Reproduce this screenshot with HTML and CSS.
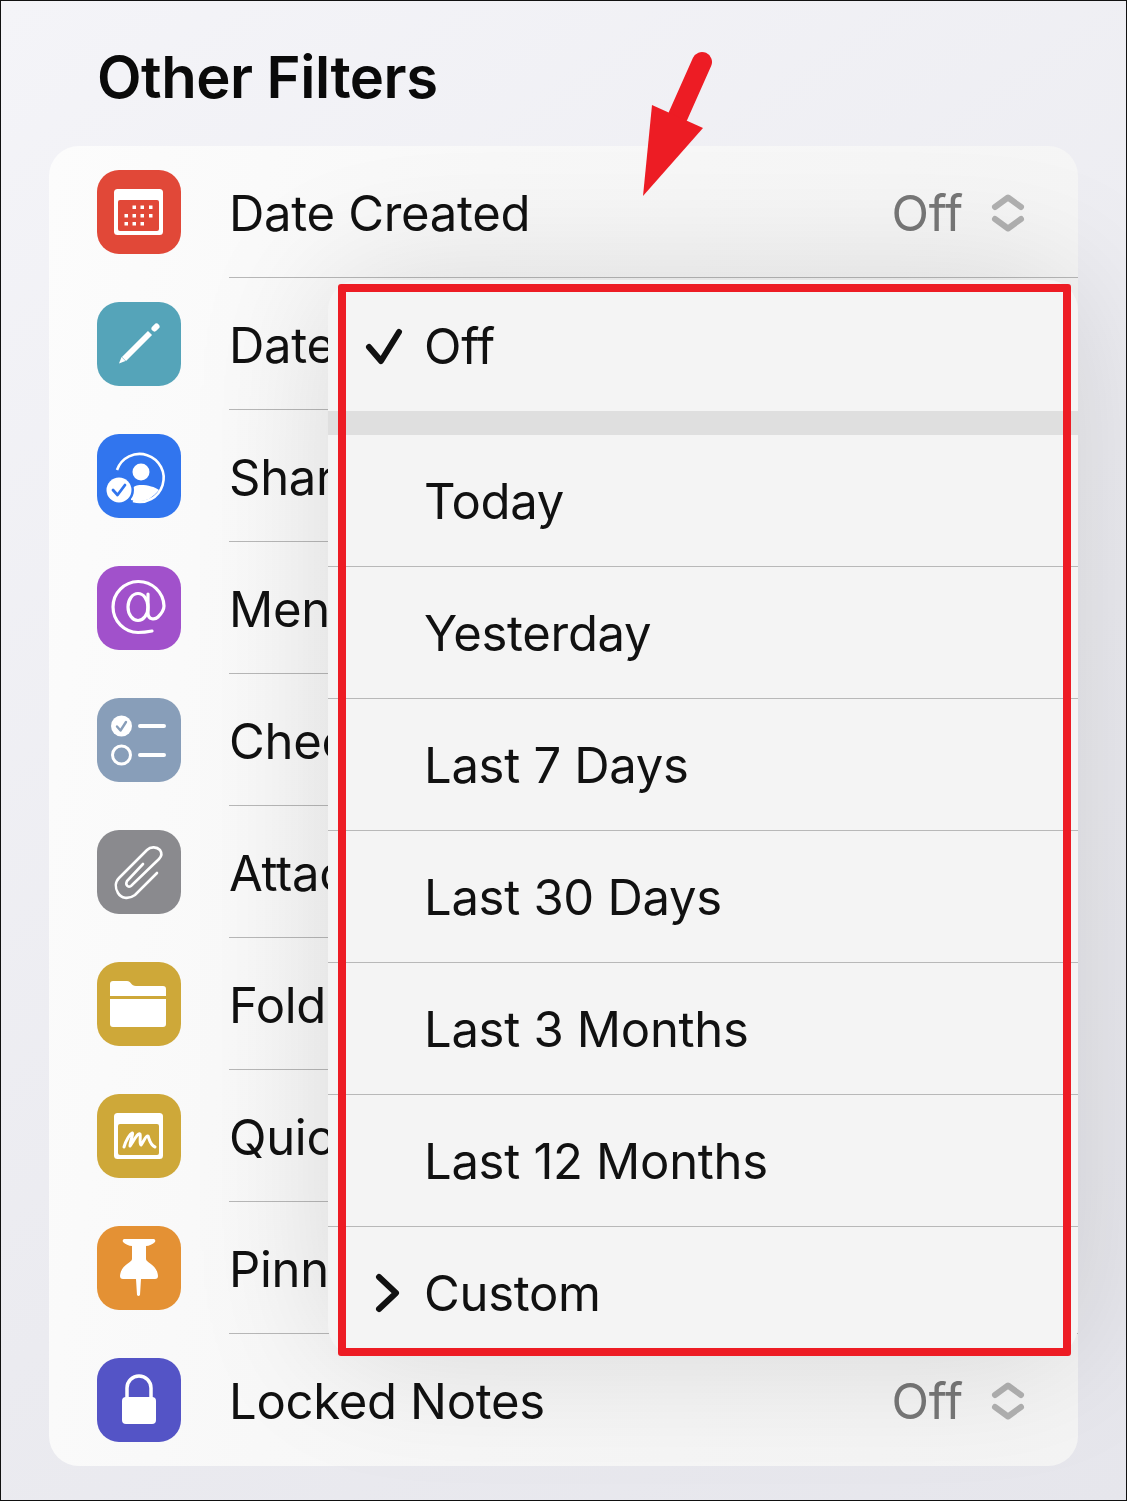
FILE: index.html
```html
<!DOCTYPE html>
<html lang="en">
<head>
<meta charset="utf-8">
<title>Other Filters</title>
<link rel="stylesheet" href="styles.css">
</head>
<body>
<main class="page">
  <h1 class="title">Other Filters</h1>

  <section class="card">
    <div class="row">
      <svg class="icon" viewBox="0 0 84 84"><rect width="84" height="84" rx="22" fill="#e14838"/><rect x="17" y="19" width="49" height="46" rx="3.5" fill="#fff"/><rect x="21" y="30" width="41" height="31" rx="2" fill="#e14838"/><g fill="#fff"><rect x="35.500" y="35.500" width="3.500" height="3.500"/><rect x="43.500" y="35.500" width="3.500" height="3.500"/><rect x="52" y="35.500" width="3.500" height="3.500"/><rect x="27.500" y="44" width="3.500" height="3.500"/><rect x="35.500" y="44" width="3.500" height="3.500"/><rect x="43.500" y="44" width="3.500" height="3.500"/><rect x="52" y="44" width="3.500" height="3.500"/><rect x="27.500" y="52" width="3.500" height="3.500"/><rect x="35.500" y="52" width="3.500" height="3.500"/><rect x="43.500" y="52" width="3.500" height="3.500"/></g></svg>
      <div class="row-body"><span class="label">Date Created</span><span class="value">Off</span>
        <svg class="updown" viewBox="0 0 34 40"><path d="M4 14 17 4.500 30 14M4 26 17 35.500 30 26"/></svg></div>
    </div>
    <div class="row">
      <svg class="icon" viewBox="0 0 84 84"><rect width="84" height="84" rx="22" fill="#55a4b9"/><path d="M22 61.500 24.500 55 28.500 59Z" fill="#fff"/><path d="M27 57 53 31" stroke="#fff" stroke-width="5.800"/><path d="M57.500 26.500 59.500 24.500" stroke="#fff" stroke-width="6" stroke-linecap="round"/></svg>
      <div class="row-body"><span class="label label-covered">Date Edited</span></div>
    </div>
    <div class="row">
      <svg class="icon" viewBox="0 0 84 84"><rect width="84" height="84" rx="22" fill="#3175ee"/><path d="M20 36A24 24 0 1 1 36 67" fill="none" stroke="#fff" stroke-width="2.600"/><circle cx="44" cy="38" r="8.500" fill="#fff"/><path d="M34 55C38 51 42 51 44 51 51 51 58 53 62 56 56 63 50 67 44 67 40 67 37 67 34 66Z" fill="#fff"/><circle cx="22" cy="56" r="15" fill="#3175ee"/><circle cx="22" cy="56" r="12.500" fill="#fff"/><path d="M16 56 20.500 61 28 51" fill="none" stroke="#3175ee" stroke-width="2.800" stroke-linecap="round" stroke-linejoin="round"/></svg>
      <div class="row-body"><span class="label label-covered">Shared</span></div>
    </div>
    <div class="row">
      <svg class="icon" viewBox="0 0 84 84"><rect width="84" height="84" rx="22" fill="#a151cb"/><g fill="none" stroke="#fff" stroke-width="3.200" stroke-linecap="round"><ellipse cx="41" cy="41" rx="10" ry="13.500"/><path d="M51 28V47C51 54 58 54 61 51 65 47 67 43 67 40A25.500 25.500 0 1 0 41 66.500C46 66.500 50 66 55 65"/></g></svg>
      <div class="row-body"><span class="label label-covered">Mentions</span></div>
    </div>
    <div class="row">
      <svg class="icon" viewBox="0 0 84 84"><rect width="84" height="84" rx="22" fill="#889eb9"/><circle cx="24.500" cy="28" r="10.500" fill="#fff"/><path d="M20 28.500 23.500 32.500 29 24" fill="none" stroke="#889eb9" stroke-width="2.400" stroke-linecap="round" stroke-linejoin="round"/><circle cx="24.500" cy="57" r="9" fill="none" stroke="#fff" stroke-width="3"/><path d="M43 28H67M43 57H67" stroke="#fff" stroke-width="4" stroke-linecap="round"/></svg>
      <div class="row-body"><span class="label label-covered">Checklists</span></div>
    </div>
    <div class="row">
      <svg class="icon" viewBox="0 0 84 84"><rect width="84" height="84" rx="22" fill="#8a8a8e"/><path d="M60 43 38 65C31 70 24 68 21 63 18 58 18 52 22 48L50 20C54 16 60 17 63 20 65 23 65 26 62 29L34 56C31 58 28 55 30 51L46 34" fill="none" stroke="#fff" stroke-width="2.600" stroke-linecap="round"/></svg>
      <div class="row-body"><span class="label label-covered">Attachments</span></div>
    </div>
    <div class="row">
      <svg class="icon" viewBox="0 0 84 84"><rect width="84" height="84" rx="22" fill="#cea839"/><path d="M13 34V22Q13 19 16 19H30C34 19 34 24 39 24H66Q69 24 69 27V34ZM13 37H69V62Q69 65 66 65H16Q13 65 13 62Z" fill="#fff"/></svg>
      <div class="row-body"><span class="label label-covered">Folders</span></div>
    </div>
    <div class="row">
      <svg class="icon" viewBox="0 0 84 84"><rect width="84" height="84" rx="22" fill="#cea839"/><rect x="17" y="19" width="49" height="46" rx="3.500" fill="#fff"/><rect x="21" y="30" width="41" height="31" rx="2" fill="#cea839"/><path d="M27 53C29 46 33 40 35 39 37 38 33 48 33 52 36 48 41 38 43 40 44 42 42 50 44 51 47 47 49 41 51 42 52 44 53 51 58 53" fill="none" stroke="#fff" stroke-width="3" stroke-linecap="round" stroke-linejoin="round"/></svg>
      <div class="row-body"><span class="label label-covered">Quick Notes</span></div>
    </div>
    <div class="row">
      <svg class="icon" viewBox="0 0 84 84"><rect width="84" height="84" rx="22" fill="#e49134"/><path d="M27 13H57Q59 14 58 16C56 18 52 20 49 20V33C49 37 60 38 61 50Q61 53 58 53H44L43 69Q41.500 71 40 69L39 53H26Q23 53 23 50C24 38 35 37 35 33V20C32 20 28 18 26 16Q25 14 27 13Z" fill="#fff"/></svg>
      <div class="row-body"><span class="label label-covered">Pinned Notes</span></div>
    </div>
    <div class="row row-last">
      <svg class="icon" viewBox="0 0 84 84"><rect width="84" height="84" rx="22" fill="#5454c6"/><path d="M30 40V30A12 12 0 0 1 54 30V40" fill="none" stroke="#fff" stroke-width="3.500"/><rect x="25" y="39" width="34" height="27" rx="4" fill="#fff"/></svg>
      <div class="row-body"><span class="label">Locked Notes</span><span class="value">Off</span>
        <svg class="updown" viewBox="0 0 34 40"><path d="M4 14 17 4.500 30 14M4 26 17 35.500 30 26"/></svg></div>
    </div>

    <div class="menu">
      <div class="menu-row menu-row-first">
        <svg class="menu-mark" viewBox="0 0 40 40"><path d="M4 21 16 35 34 6"/></svg>
        <span class="menu-label">Off</span>
      </div>
      <div class="menu-band"></div>
      <div class="menu-row"><span class="menu-label">Today</span></div>
      <div class="menu-row"><span class="menu-label">Yesterday</span></div>
      <div class="menu-row"><span class="menu-label">Last 7 Days</span></div>
      <div class="menu-row"><span class="menu-label">Last 30 Days</span></div>
      <div class="menu-row"><span class="menu-label">Last 3 Months</span></div>
      <div class="menu-row"><span class="menu-label">Last 12 Months</span></div>
      <div class="menu-row menu-row-last">
        <svg class="menu-mark" viewBox="0 0 40 40"><path d="M14 4 31 20 14 36"/></svg>
        <span class="menu-label">Custom</span>
      </div>
    </div>
  </section>

  <div class="highlight"></div>
  <svg class="arrow" viewBox="0 0 80 160"><path d="M62 12 38 66" fill="none" stroke="#ed1c24" stroke-width="20" stroke-linecap="round"/><path d="M3 146 12 55 63 78Z" fill="#ed1c24"/></svg>
</main>
</body>
</html>
```
FILE: styles.css
```css
* { box-sizing: border-box; }

html, body { margin: 0; padding: 0; }

body {
  font-family: Inter, "Liberation Sans", sans-serif;
  color: #111;
}

.page {
  position: relative;
  width: 1127px;
  height: 1501px;
  overflow: hidden;
  padding: 0 48px;
  border: 1px solid #111;
  background: linear-gradient(145deg, #f4f4f8 0%, #ebebf0 60%, #e6e6ec 100%);
}

.title {
  margin: 0;
  height: 145px;
  padding: 42px 0 0 48px;
  font-size: 58px;
  line-height: 68px;
  font-weight: 600;
  letter-spacing: -0.5px;
  color: #0a0a0a;
}

.card {
  position: relative;
  width: 1029px;
  height: 1320px;
  border-radius: 30px;
  background: linear-gradient(100deg, #fcfcfc 0%, #f8f8f8 35%, #f4f4f4 100%);
}

.row {
  display: flex;
  height: 132px;
  padding-left: 48px;
  align-items: center;
}

.icon {
  flex: none;
  width: 84px;
  height: 84px;
  margin-right: 48px;
}

.row-body {
  flex: 1;
  display: flex;
  align-items: center;
  align-self: stretch;
  padding: 0 53px 0 0;
  border-bottom: 1px solid #b8b8b8;
}

.row-last .row-body { border-bottom: 0; }

.label {
  flex: 1;
  font-size: 49px;
  line-height: 60px;
  letter-spacing: -0.3px;
  margin-top: 4px;
}

.label-covered {
  flex: none;
  width: 99px;
  overflow: hidden;
  white-space: nowrap;
}

.value {
  font-size: 49px;
  line-height: 60px;
  letter-spacing: -0.1px;
  margin: 4px 28px 0 0;
  color: #777;
}

.updown {
  flex: none;
  width: 34px;
  height: 40px;
  margin-top: 2px;
}

.updown path {
  fill: none;
  stroke: #b1b1b1;
  stroke-width: 6;
  stroke-linecap: round;
  stroke-linejoin: round;
}

.menu {
  position: absolute;
  left: 279px;
  top: 134px;
  width: 750px;
  height: 1076px;
  overflow: hidden;
  display: flex;
  flex-direction: column;
  border-radius: 30px;
  background: #f4f4f4;
  box-shadow: 0 0 140px rgba(0, 0, 0, .13);
}

.menu-row {
  position: relative;
  flex: none;
  display: flex;
  align-items: center;
  height: 132px;
  padding-left: 96px;
  border-bottom: 1px solid #b8b8b8;
}

.menu-row-first { height: 131px; border-bottom: 0; }

.menu-row-last { border-bottom: 0; }

.menu-band {
  flex: none;
  height: 24px;
  background: #dfdfdf;
}

.menu-label {
  font-size: 49px;
  line-height: 60px;
  letter-spacing: -0.3px;
  margin-top: 2px;
}

.menu-mark {
  position: absolute;
  left: 37px;
  top: 46px;
  width: 40px;
  height: 40px;
}

.menu-mark path {
  fill: none;
  stroke: #111;
  stroke-width: 6;
  stroke-linecap: round;
  stroke-linejoin: round;
}

.highlight {
  position: absolute;
  left: 337px;
  top: 283px;
  width: 733px;
  height: 1072px;
  border: 8px solid #ed1c24;
  border-radius: 3px;
}

.arrow {
  position: absolute;
  left: 639px;
  top: 49px;
  width: 80px;
  height: 160px;
}
```
